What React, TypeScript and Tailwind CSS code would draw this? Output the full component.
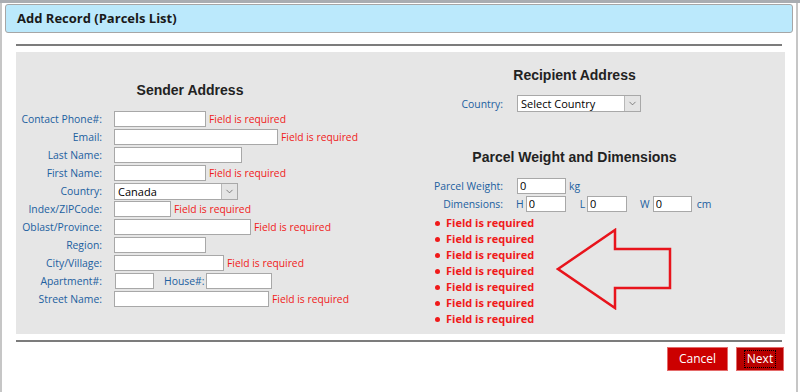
import { ChevronDown } from "lucide-react";

const label = "text-[#2160a0] text-[10.4px] leading-[16px] whitespace-nowrap";
const err = "text-[#f01a1a] text-[10.3px] leading-[16px] whitespace-nowrap ml-[3px]";
const input = "h-[16px] bg-white border border-[#a8a8a8] text-[11px] px-[2px] outline-none";

function Select({ value, w }: { value: string; w: string }) {
  return (
    <div className={`${w} h-[17px] bg-white border border-[#a8a8a8] flex items-center justify-between`}>
      <span className="text-[11px] text-black pl-[3px] leading-none">{value}</span>
      <span className="w-[16px] h-full bg-[#e4e4e4] border-l border-[#b8b8b8] flex items-center justify-center">
        <ChevronDown size={11} strokeWidth={1.5} className="text-[#555]" />
      </span>
    </div>
  );
}

type Row = { name: string; w: string; error?: boolean; select?: string };

const senderRows: Row[] = [
  { name: "Contact Phone#:", w: "w-[92px]", error: true },
  { name: "Email:", w: "w-[164px]", error: true },
  { name: "Last Name:", w: "w-[128px]" },
  { name: "First Name:", w: "w-[92px]", error: true },
  { name: "Country:", w: "w-[124px]", select: "Canada" },
  { name: "Index/ZIPCode:", w: "w-[57px]", error: true },
  { name: "Oblast/Province:", w: "w-[137px]", error: true },
  { name: "Region:", w: "w-[92px]" },
  { name: "City/Village:", w: "w-[110px]", error: true },
  { name: "Apartment#:", w: "" },
  { name: "Street Name:", w: "w-[155px]", error: true },
];

function SenderRow({ row }: { row: Row }) {
  return (
    <div className="flex items-center h-[18px]">
      <div className={`${label} w-[86px] text-right`}>{row.name}</div>
      <div className="ml-[12px] flex items-center">
        {row.name === "Apartment#:" ? (
          <>
            <input className={`${input} w-[39px] ml-[1px]`} />
            <span className={`${label} ml-[10px] mr-[1px]`}>House#:</span>
            <input className={`${input} w-[66px]`} />
          </>
        ) : row.select ? (
          <Select value={row.select} w={row.w} />
        ) : (
          <input className={`${input} ${row.w}`} />
        )}
        {row.error && <span className={err}>Field is required</span>}
      </div>
    </div>
  );
}

const heading = "text-center text-[14px] font-bold text-[#222] leading-[16px]";
const headingFont = { fontFamily: '"Liberation Sans", Arial, sans-serif' };

export default function App() {
  return (
    <div className="w-[800px] h-[392px] bg-white overflow-hidden relative" style={{ fontFamily: '"Open Sans", "Liberation Sans", sans-serif' }}>
      <div className="h-[3px] bg-[#a9adb2]" />
      <div className="h-[389px] border-l-[2px] border-r-[2px] border-[#c6c6c6] mr-[2px] pt-[1px] px-[3px]">
        <div className="h-[29px] bg-[#bbe9fc] border border-[#a6a6a6] rounded-[3px] flex items-center pl-[11px]">
          <span className="text-[13px] font-bold text-[#1a1a1a]">Add Record (Parcels List)</span>
        </div>
        <div className="ml-[11px] mr-[11px] mt-[11px] h-[2px] bg-[#7c7c7c]" />
        <div className="ml-[11px] mr-[8px] mt-[6px] h-[282px] bg-[#e6e6e6] flex">
          <div className="w-[348px] pt-[30px] flex flex-col">
            <div className={`${heading} mb-[12px]`} style={headingFont}>
              Sender Address
            </div>
            {senderRows.map((r) => (
              <SenderRow key={r.name} row={r} />
            ))}
          </div>
          <div className="flex-1 pt-[15px] flex flex-col relative">
            <div className={`${heading} mb-[12px]`} style={headingFont}>
              Recipient Address
            </div>
            <div className="flex items-center">
              <div className={`${label} w-[139px] text-right`}>Country:</div>
              <div className="ml-[14px]">
                <Select value="Select Country" w="w-[124px]" />
              </div>
            </div>
            <div className={`${heading} mt-[37px] mb-[12px]`} style={headingFont}>
              Parcel Weight and Dimensions
            </div>
            <div className="flex items-center h-[18px]">
              <div className={`${label} w-[139px] text-right`}>Parcel Weight:</div>
              <input defaultValue="0" className={`${input} w-[49px] ml-[14px]`} />
              <span className={`${label} ml-[3px]`}>kg</span>
            </div>
            <div className="flex items-center h-[18px]">
              <div className={`${label} w-[139px] text-right`}>Dimensions:</div>
              <span className={`${label} ml-[13px] mr-[2px]`}>H</span>
              <input defaultValue="0" className={`${input} w-[40px]`} />
              <span className={`${label} ml-[14px] mr-[2px]`}>L</span>
              <input defaultValue="0" className={`${input} w-[40px]`} />
              <span className={`${label} ml-[13px] mr-[3px]`}>W</span>
              <input defaultValue="0" className={`${input} w-[39px]`} />
              <span className={`${label} ml-[5px]`}>cm</span>
            </div>
            <ul className="ml-[70px] mt-[2px]">
              {Array.from({ length: 7 }).map((_, i) => (
                <li key={i} className="flex items-center h-[16px]">
                  <span className="w-[5px] h-[5px] rounded-full bg-[#f01a1a] ml-[1px] mr-[6px]" />
                  <span className="text-[11px] font-bold text-[#f01a1a] leading-[16px]">Field is required</span>
                </li>
              ))}
            </ul>
            <svg className="absolute left-[192px] top-[176px]" width="116" height="82" viewBox="0 0 116 82">
              <polygon points="2,41 59,2 59,21 114,21 114,60 59,60 59,80" fill="none" stroke="#e8141c" strokeWidth="2.5" />
            </svg>
          </div>
        </div>
        <div className="ml-[11px] mr-[11px] mt-[6px] h-[2px] bg-[#7c7c7c]" />
        <div className="flex justify-end gap-[8px] mr-[9px] mt-[5px]">
          <button className="h-[24px] w-[61px] bg-[#cc0000] border border-[#e46a6a] text-white text-[12px]">Cancel</button>
          <button className="h-[24px] w-[48px] bg-[#b80000] border border-[#e46a6a] text-white text-[12px] flex items-center justify-center">
            <span className="outline outline-1 outline-dotted outline-black px-[2px] leading-[16px]">Next</span>
          </button>
        </div>
      </div>
    </div>
  );
}
